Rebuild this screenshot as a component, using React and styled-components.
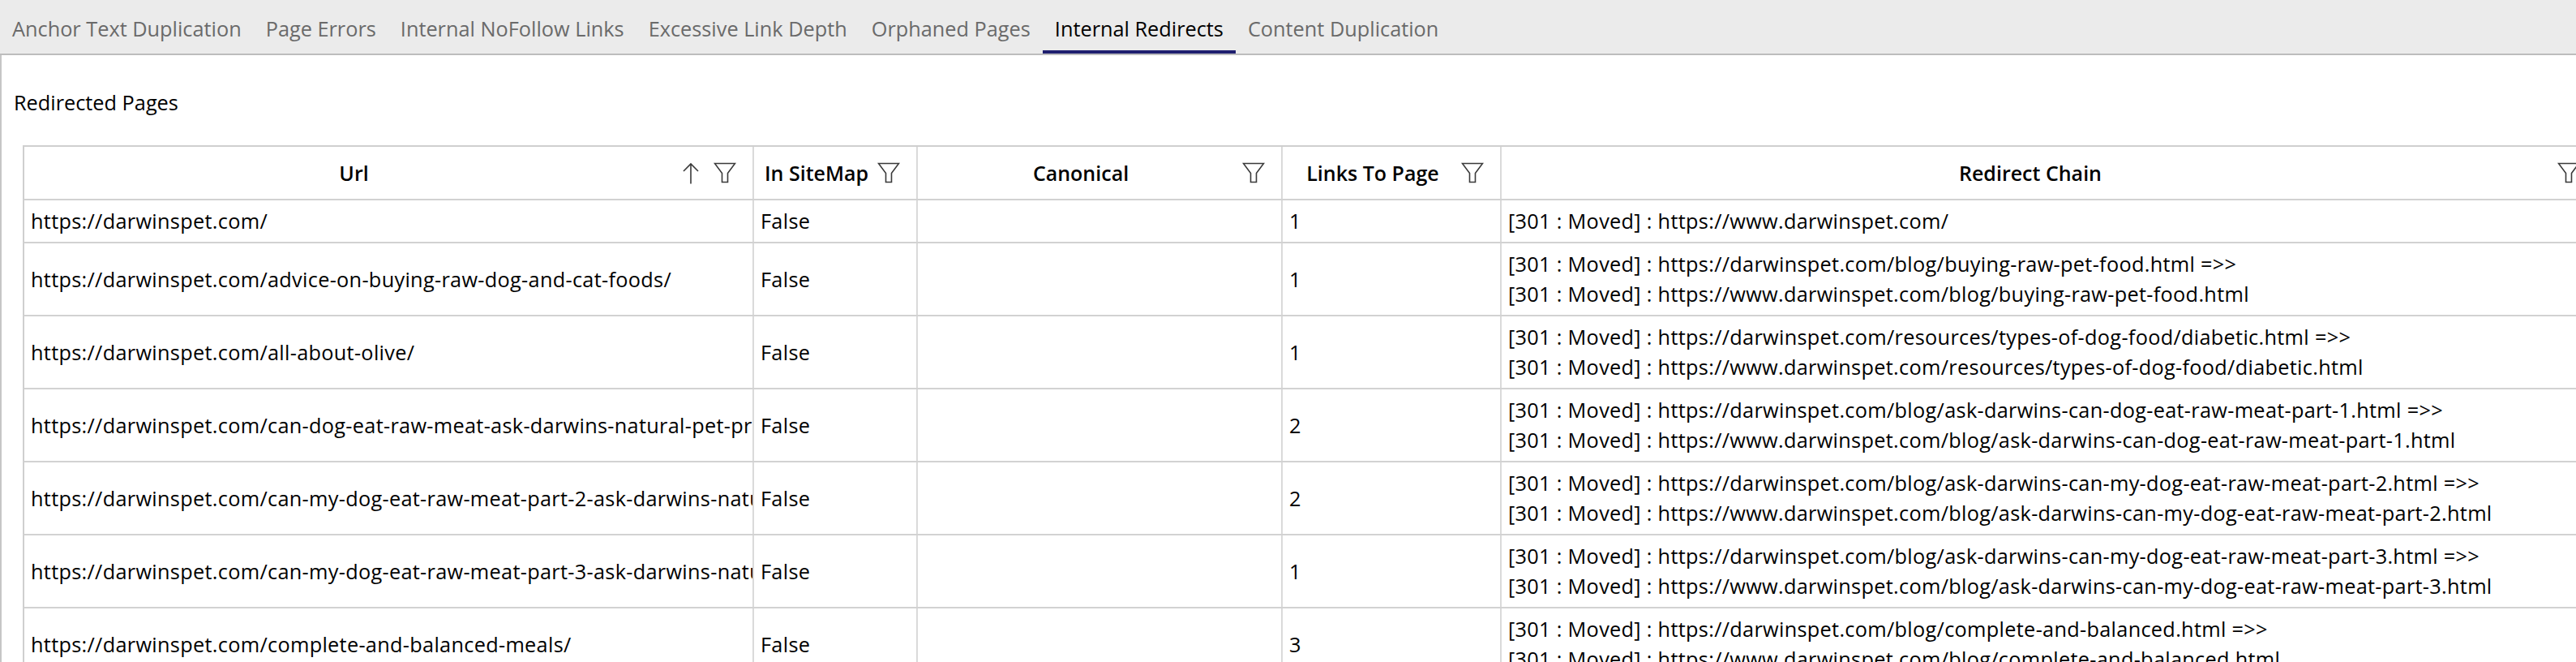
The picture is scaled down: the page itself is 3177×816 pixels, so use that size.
import React from "react";
import styled, { createGlobalStyle, css } from "styled-components";

const GlobalStyle = createGlobalStyle`
  html, body {
    margin: 0;
    padding: 0;
    background: #fff;
    overflow: hidden;
  }
  body {
    font-family: "Open Sans", "Noto Sans", "Liberation Sans", sans-serif;
    color: #000;
  }
`;

const Page = styled.div`
  width: 3177px;
  height: 816px;
  overflow: hidden;
  display: flex;
  flex-direction: column;
`;

const TabBar = styled.nav`
  display: flex;
  height: 66px;
  flex-shrink: 0;
  background: #ebebeb;
  border-bottom: 2px solid #bdbdbd;
`;

const Tab = styled.div`
  display: flex;
  align-items: center;
  padding: 7px 15px 0;
  font-size: 25.3px;
  color: #6a6a6a;
  white-space: nowrap;
  box-sizing: border-box;
  border-bottom: 4px solid transparent;
  ${(p) =>
    p.$active &&
    css`
      color: #000;
      border-bottom-color: #1f1f6f;
    `}
`;

const Panel = styled.section`
  flex: 1;
  border-left: 2px solid #c6c6c6;
  padding: 40px 0 0 15px;
  min-height: 0;
`;

const Title = styled.h2`
  margin: 0 0 35px;
  font-size: 25.3px;
  font-weight: 400;
  line-height: 36px;
`;

const Table = styled.div`
  margin-left: 11px;
  width: 3174px;
  border-top: 2px solid #cfcfcf;
  border-left: 2px solid #cfcfcf;
`;

const Row = styled.div`
  display: grid;
  grid-template-columns: 900px 202px 450px 270px 1352px;
  border-bottom: 2px solid #d2d2d2;
`;

const HeadCell = styled.div`
  display: flex;
  align-items: center;
  height: 64px;
  padding: 0 20px 0 12px;
  gap: 10px;
  border-right: 2px solid #dadada;
  font-size: 25px;
  font-weight: 600;
  overflow: hidden;
`;

const HeadLabel = styled.span`
  flex: 1;
  text-align: center;
  white-space: nowrap;
`;

const Icons = styled.span`
  display: flex;
  align-items: center;
  gap: 17px;
`;

const Cell = styled.div`
  display: flex;
  flex-direction: column;
  justify-content: center;
  padding: 7px 8px;
  min-height: 37px;
  border-right: 2px solid #dadada;
  font-size: 25.3px;
  letter-spacing: 0.3px;
  line-height: 37px;
  white-space: nowrap;
  overflow: hidden;
`;

const Funnel = () => (
  <svg width="28" height="26" viewBox="0 0 28 26" fill="none">
    <path
      d="M1.5 1.5H26.5L17.5 13.5V24.5H10.5V13.5Z"
      stroke="#3a3a3a"
      strokeWidth="1.6"
      strokeLinejoin="miter"
    />
  </svg>
);

const UpArrow = () => (
  <svg width="22" height="27" viewBox="0 0 22 27" fill="none">
    <path d="M11 26.5V2M2 11L11 2L20 11" stroke="#3a3a3a" strokeWidth="1.6" />
  </svg>
);

const tabs = [
  "Anchor Text Duplication",
  "Page Errors",
  "Internal NoFollow Links",
  "Excessive Link Depth",
  "Orphaned Pages",
  "Internal Redirects",
  "Content Duplication",
];

const columns = [
  { label: "Url", sort: true },
  { label: "In SiteMap" },
  { label: "Canonical" },
  { label: "Links To Page" },
  { label: "Redirect Chain" },
];

const site = "https://darwinspet.com/";
const moved = "[301 : Moved] : ";

const rows = [
  {
    url: site,
    links: 1,
    chain: [moved + "https://www.darwinspet.com/"],
  },
  {
    url: site + "advice-on-buying-raw-dog-and-cat-foods/",
    links: 1,
    chain: [
      moved + "https://darwinspet.com/blog/buying-raw-pet-food.html =>>",
      moved + "https://www.darwinspet.com/blog/buying-raw-pet-food.html",
    ],
  },
  {
    url: site + "all-about-olive/",
    links: 1,
    chain: [
      moved + "https://darwinspet.com/resources/types-of-dog-food/diabetic.html =>>",
      moved + "https://www.darwinspet.com/resources/types-of-dog-food/diabetic.html",
    ],
  },
  {
    url: site + "can-dog-eat-raw-meat-ask-darwins-natural-pet-products/",
    links: 2,
    chain: [
      moved + "https://darwinspet.com/blog/ask-darwins-can-dog-eat-raw-meat-part-1.html =>>",
      moved + "https://www.darwinspet.com/blog/ask-darwins-can-dog-eat-raw-meat-part-1.html",
    ],
  },
  {
    url: site + "can-my-dog-eat-raw-meat-part-2-ask-darwins-natural-pet-products/",
    links: 2,
    chain: [
      moved + "https://darwinspet.com/blog/ask-darwins-can-my-dog-eat-raw-meat-part-2.html =>>",
      moved + "https://www.darwinspet.com/blog/ask-darwins-can-my-dog-eat-raw-meat-part-2.html",
    ],
  },
  {
    url: site + "can-my-dog-eat-raw-meat-part-3-ask-darwins-natural-pet-products/",
    links: 1,
    chain: [
      moved + "https://darwinspet.com/blog/ask-darwins-can-my-dog-eat-raw-meat-part-3.html =>>",
      moved + "https://www.darwinspet.com/blog/ask-darwins-can-my-dog-eat-raw-meat-part-3.html",
    ],
  },
  {
    url: site + "complete-and-balanced-meals/",
    links: 3,
    chain: [
      moved + "https://darwinspet.com/blog/complete-and-balanced.html =>>",
      moved + "https://www.darwinspet.com/blog/complete-and-balanced.html",
    ],
  },
];

export default function App() {
  return (
    <Page>
      <GlobalStyle />
      <TabBar>
        {tabs.map((t) => (
          <Tab key={t} $active={t === "Internal Redirects"}>
            {t}
          </Tab>
        ))}
      </TabBar>
      <Panel>
        <Title>Redirected Pages</Title>
        <Table>
          <Row>
            {columns.map((c) => (
              <HeadCell key={c.label}>
                <HeadLabel>{c.label}</HeadLabel>
                <Icons>
                  {c.sort && <UpArrow />}
                  <Funnel />
                </Icons>
              </HeadCell>
            ))}
          </Row>
          {rows.map((r) => (
            <Row key={r.url}>
              <Cell>{r.url}</Cell>
              <Cell>False</Cell>
              <Cell />
              <Cell>{r.links}</Cell>
              <Cell>
                {r.chain.map((line) => (
                  <div key={line}>{line}</div>
                ))}
              </Cell>
            </Row>
          ))}
        </Table>
      </Panel>
    </Page>
  );
}
